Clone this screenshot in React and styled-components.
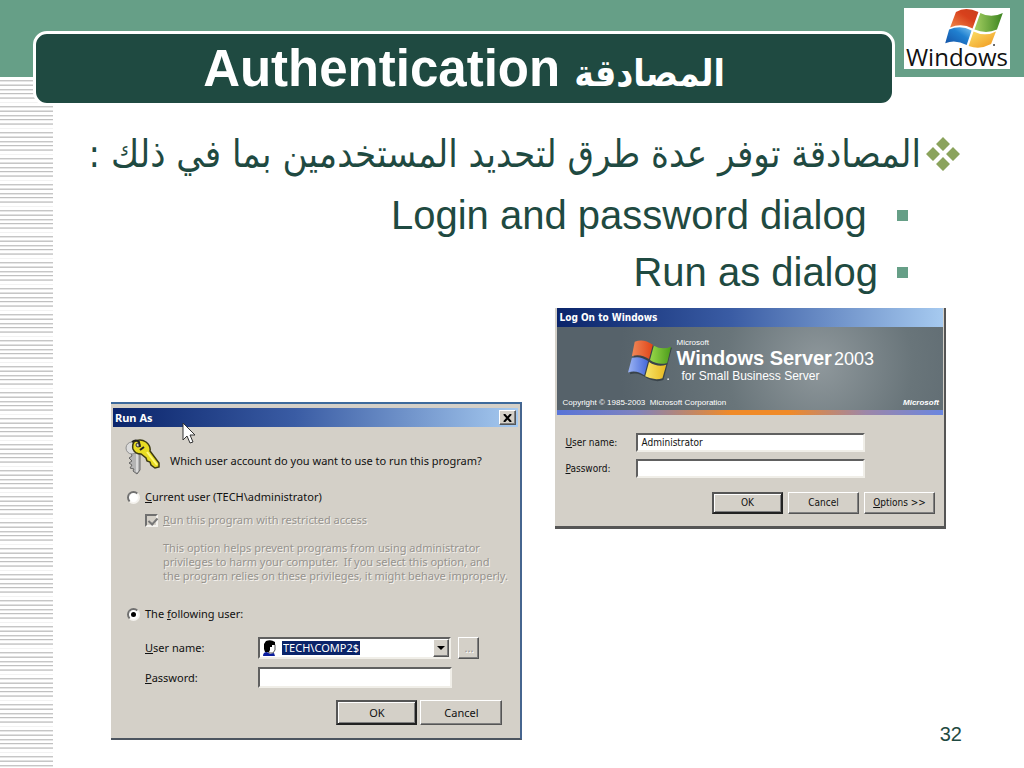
import styled, { createGlobalStyle, css } from "styled-components";

const colors = {
  green: "#669f87",
  darkGreen: "#1f4a41",
  olive: "#8ba35c",
  face: "#d4d0c8",
  shadow: "#808080",
  navy: "#0a246a",
};

const condensed = `"DejaVu Sans Condensed", "DejaVu Sans", sans-serif`;

const GlobalStyle = createGlobalStyle`
  * {
    box-sizing: border-box;
  }
  body {
    margin: 0;
    background: white;
    color: ${colors.darkGreen};
    font-family: "Liberation Sans", "DejaVu Sans", sans-serif;
  }
`;

/* Slide */

const Slide = styled.main`
  min-height: 100vh;
  background: repeating-linear-gradient(
      #fff 0 3px, #c6c6c6 3px 4px, #e6e6e6 4px 5px,
      #fff 5px 7px, #e0e0e0 7px 8px, #c6c6c6 8px 9px,
      #fff 9px 12px, #c6c6c6 12px 13px, #e6e6e6 13px 14px,
      #fff 14px 16px, #c0c0c0 16px 17px, #f0f0f0 17px 18px,
      #fff 18px 20px, #d8d8d8 20px 21px, #d0d0d0 21px 22px,
      #fff 22px 25px, #f2f2f2 25px 26px
    )
    0 77px / 53px 100% no-repeat;
`;

const Header = styled.header`
  display: flex;
  align-items: flex-start;
  gap: 9px;
  padding: 8px 14px 0 33px;
  background: linear-gradient(${colors.green} 77px, transparent 77px);
`;

const Title = styled.h1`
  flex: 1;
  height: 75px;
  margin: 23px 0 0;
  border: 3px solid white;
  border-radius: 14px;
  background: ${colors.darkGreen};
  color: white;
  font-size: 51px;
  line-height: 69px;
  text-align: center;
`;

const TitleArabic = styled.span`
  font-family: ${condensed};
  font-size: 37px;
  line-height: 1;
`;

const Brand = styled.div`
  display: flex;
  flex-direction: column;
  align-items: center;
  width: 106px;
  height: 61px;
  background: white;
  color: #111;
  font: 24px/16px "Open Sans", sans-serif;

  svg {
    flex: none;
    margin-left: 34px;
  }
`;

const Points = styled.ul`
  margin: 0;
  padding: 18px 64px 7px 0;
  list-style: none;
`;

const Point = styled.li`
  display: flex;
  align-items: center;
  gap: 5px;
  height: 60px;
  font-size: 40px;
  white-space: nowrap;

  svg {
    flex: none;
  }

  &:lang(ar) {
    margin-bottom: 3px;
    font-family: ${condensed};
    font-size: 38px;
  }

  ${({ $sub }) => $sub && css`
    gap: 19px;
    height: 57px;
    padding-right: 52px;
  `}
`;

const Square = styled.span`
  width: 11px;
  height: 11px;
  background: ${colors.green};
`;

const Figures = styled.section`
  display: grid;
  grid-template-columns: minmax(0, 412fr) minmax(0, 407fr);
  grid-template-rows: auto 1fr;
  column-gap: 33px;
  padding: 0 62px 0 111px;
`;

const PageNumber = styled.footer`
  align-self: end;
  justify-self: end;
  font-size: 20px;
  line-height: 20px;
`;

/* Windows dialogs */

const Dialog = styled.form`
  background: ${colors.face};
  color: #111;
`;

const RunAsDialog = styled(Dialog)`
  grid-row: 1 / 3;
  margin: 94px 0 4px;
  padding: 4px 2px 0;
  border-top: 2px solid #3d6a9c;
  border-right: 2px solid #46658f;
  border-bottom: 2px solid #4c5560;
  font: 11px/16px "Noto Sans", sans-serif;
`;

const LogOnDialog = styled(Dialog)`
  margin-right: 16px;
  padding: 0 1px 0 2px;
  border-right: 2px solid #555;
  border-bottom: 3px solid #555;
  font: 10px/16px ${condensed};
`;

const TitleBar = styled.div`
  position: relative;
  display: flex;
  align-items: center;
  justify-content: space-between;
  height: 19px;
  padding: 0 2px;
  background: linear-gradient(90deg, ${colors.navy}, #3a5ca4 45%, #a6caf0);
  color: white;
  font-weight: bold;
`;

const raised = css`
  border: 1px solid;
  border-color: #fff #555 #555 #fff;
  box-shadow: inset -1px -1px ${colors.shadow};
  background: ${colors.face};
`;

const Button = styled.button`
  ${raised}
  width: ${({ $width }) => $width || 71}px;
  height: ${({ $height }) => $height || 22}px;
  padding: 0;
  color: #111;
  font: inherit;

  ${({ $primary }) => $primary && css`
    border: 2px solid #333;
    border-color: #555 #222 #222 #555;
    box-shadow: inset 1px 1px #fff, inset -1px -1px ${colors.shadow};
  `}
  &:disabled {
    color: #999;
    text-shadow: 1px 1px white;
  }
`;

const CloseButton = styled.button`
  ${raised}
  display: grid;
  place-items: center;
  width: 17px;
  height: 15px;
  padding: 0;
`;

const Pointer = styled.svg`
  position: absolute;
  left: 69px;
  top: 14px;
  z-index: 1;
`;

const sunken = css`
  border: 2px solid;
  border-color: #606060 #f0eee8 #f0eee8 #606060;
  background: white;
`;

const TextInput = styled.input`
  ${sunken}
  flex: 1;
  min-width: 0;
  height: ${({ $height }) => $height || 19}px;
  padding: 0 3px;
  color: #111;
  font: inherit;
`;

const RunAsBody = styled.div`
  display: flex;
  flex-direction: column;
  padding: 12px 16px 13px 12px;
`;

const Prompt = styled.div`
  display: flex;
  align-items: flex-end;
  gap: 9px;
  height: 36px;
  margin-bottom: 14px;

  svg {
    flex: none;
  }
  span {
    padding-bottom: 6px;
  }
`;

const Choice = styled.label`
  display: flex;
  align-items: center;
  gap: 5px;
  padding-left: 2px;
`;

const RestrictedChoice = styled(Choice)`
  margin-top: 7px;
  padding-left: 20px;
  color: #96938e;
  text-shadow: 1px 1px #f4f2ee;
`;

const Radio = styled.input.attrs({ type: "radio" })`
  appearance: none;
  display: grid;
  place-items: center;
  width: 13px;
  height: 13px;
  margin: 0;
  border: 2px solid;
  border-color: #707070 #f4f2ee #f4f2ee #707070;
  border-radius: 50%;
  background: white;

  &:checked::after {
    content: "";
    width: 5px;
    height: 5px;
    border-radius: 50%;
    background: black;
  }
`;

const Checkbox = styled.input.attrs({ type: "checkbox" })`
  appearance: none;
  width: 13px;
  height: 13px;
  margin: 0;
  border: 2px solid;
  border-color: #707070 #f4f2ee #f4f2ee #707070;
  background: ${colors.face};

  &:checked::after {
    content: "";
    display: block;
    width: 4px;
    height: 7px;
    margin-left: 3px;
    border: solid #777;
    border-width: 0 2px 2px 0;
    transform: rotate(42deg);
  }
`;

const Explanation = styled.p`
  margin: 13px 0 23px;
  padding-left: 38px;
  color: #96938e;
  line-height: 14px;
  text-shadow: 1px 1px #f4f2ee;
  white-space: pre;
`;

const Field = styled.div`
  display: flex;
  align-items: center;

  & > label {
    flex: none;
    width: ${({ $label }) => $label}px;
  }
`;

const RunAsFields = styled.div`
  display: grid;
  gap: 8px;
  padding: 15px 23px 12px 20px;
`;

const Combo = styled.div`
  ${sunken}
  display: flex;
  flex: 1;
  align-items: center;
  gap: 5px;
  height: 22px;
  margin-right: 7px;
  padding-left: 3px;
`;

const UserSelect = styled.select`
  appearance: none;
  width: 78px;
  height: 14px;
  margin-right: auto;
  padding: 0 1px;
  border: 0;
  border-radius: 0;
  background: ${colors.navy};
  color: white;
  font: inherit;
  line-height: 14px;
`;

const DropButton = styled(CloseButton)`
  width: 16px;
  height: 18px;
`;

const PasswordInput = styled(TextInput)`
  margin-right: 27px;
`;

const Actions = styled.div`
  display: flex;
  justify-content: flex-end;
  gap: ${({ $gap }) => $gap}px;
`;

const Banner = styled.div`
  display: flex;
  flex-direction: column;
  justify-content: space-between;
  height: 83px;
  padding: 12px 4px 0 5px;
  background: radial-gradient(circle at 68% 45%, #8f989c, #69757a 35%, #56626a 75%);
  color: white;
`;

const Product = styled.div`
  display: flex;
  gap: 4px;
  padding-left: 66px;
  font-family: "Liberation Sans", sans-serif;
  white-space: nowrap;
`;

const ProductMaker = styled.div`
  font-size: 8px;
  line-height: 8px;
`;

const ProductName = styled.div`
  font: bold 20px/22px "Liberation Sans", sans-serif;

  span {
    margin-left: 2px;
    font-size: 18px;
    font-weight: normal;
  }
`;

const ProductEdition = styled.div`
  padding-left: 5px;
  font-size: 12px;
  line-height: 12px;
`;

const Legal = styled.div`
  display: flex;
  justify-content: space-between;
  font: 8px/15px "Liberation Sans", sans-serif;

  em {
    font-weight: bold;
  }
`;

const Stripe = styled.div`
  height: 5px;
  background: linear-gradient(90deg, #5874d8, #7d82c0 20%, #f08a28 45%, #f08a28 60%, #9c86a8 80%, #6a86e0);
`;

const LogOnBody = styled.div`
  display: grid;
  gap: 7px;
  padding: 18px 8px 12px;
`;

const LogOnField = styled(Field)`
  padding-right: 70px;
`;

const LogOnActions = styled(Actions)`
  padding-top: 7px;
`;

const BrandFlag = () => (
  <svg width="59" height="41" viewBox="0 0 60 42" aria-hidden="true">
    <defs>
      <linearGradient id="brand-red" x1="0" y1="1" x2="1" y2="0">
        <stop offset="0" stopColor="#f08a4a" />
        <stop offset=".6" stopColor="#d8401c" />
        <stop offset="1" stopColor="#c9401c" />
      </linearGradient>
      <linearGradient id="brand-green">
        <stop offset="0" stopColor="#a4cf62" />
        <stop offset="1" stopColor="#3c8420" />
      </linearGradient>
      <linearGradient id="brand-blue" x1="0" y1="1" x2="1" y2="0">
        <stop offset="0" stopColor="#1450a4" />
        <stop offset=".6" stopColor="#2080d0" />
        <stop offset="1" stopColor="#7cc4f0" />
      </linearGradient>
      <linearGradient id="brand-yellow" x1="0" y1="0" x2="1" y2="1">
        <stop offset="0" stopColor="#fbe069" />
        <stop offset="1" stopColor="#f0961c" />
      </linearGradient>
    </defs>
    <path fill="url(#brand-red)" d="M11 4Q21-2 34 4L28 21Q17 15 5 20Z" />
    <path fill="url(#brand-green)" d="M36 5Q47 11 59 5L53 22Q42 27 30 22Z" />
    <path fill="url(#brand-blue)" d="M4 22Q16 17 27 23L22 38Q11 32 0 36Z" />
    <path fill="url(#brand-yellow)" d="M29 24Q41 30 52 24L47 37Q36 43 24 39Z" />
    <circle cx="50" cy="38" r="1" fill="#333" />
  </svg>
);

const ServerFlag = () => (
  <svg width="44" height="43" viewBox="0 0 46 45" aria-hidden="true">
    <defs>
      <linearGradient id="server-red">
        <stop offset="0" stopColor="#f08858" />
        <stop offset="1" stopColor="#e04418" />
      </linearGradient>
      <linearGradient id="server-green">
        <stop offset="0" stopColor="#98d848" />
        <stop offset="1" stopColor="#4c9c1c" />
      </linearGradient>
      <linearGradient id="server-blue">
        <stop offset="0" stopColor="#9cb4f4" />
        <stop offset="1" stopColor="#4468d8" />
      </linearGradient>
      <linearGradient id="server-yellow">
        <stop offset="0" stopColor="#f8e468" />
        <stop offset="1" stopColor="#e8b820" />
      </linearGradient>
    </defs>
    <path fill="#39434a" d="M9 5Q17 0 28 8Q37 13 46 9L37 43Q29 46 20 41Q10 34 2 37Z" />
    <path fill="url(#server-red)" d="M7 3Q16-1 26 6L22 21Q13 15 4 18Z" />
    <path fill="url(#server-green)" d="M27 7Q36 12 45 8L41 25Q32 28 23 22Z" />
    <path fill="url(#server-blue)" d="M4 20Q12 17 21 23L17 38Q9 32 0 35Z" />
    <path fill="url(#server-yellow)" d="M22 24Q31 30 40 27L36 41Q28 44 18 39Z" />
    <circle cx="42" cy="42" r="1" fill="#ddd" />
  </svg>
);

const Diamonds = () => (
  <svg width="34" height="34" viewBox="0 0 34 34" fill={colors.olive} aria-hidden="true">
    <path d="M17 0l7 7-7 7-7-7zM7 10l7 7-7 7-7-7zM27 10l7 7-7 7-7-7zM17 20l7 7-7 7-7-7z" />
  </svg>
);

const Keys = () => (
  <svg width="36" height="36" viewBox="0 0 36 36" aria-hidden="true">
    <path d="M6 14h9v17l-3 4-4-3 1-2-4-1 2-3-3-2 3-2-3-3 3-2z" fill="#b4b4b4" stroke="#666" />
    <circle cx="7" cy="9" r="6" fill="#dcdcdc" stroke="#909090" />
    <path d="M12 15v18" stroke="#fff" />
    <path d="M9 3Q15-1 21 3q5 4 4 9l9 12v4l-4 1-4-3-1-3-3-1-1-3-5-4q-6 0-8-5-1-4 1-7z" fill="#e8dc22" stroke="#3c3a12" strokeWidth="1.5" />
    <path d="M22 13l10 13" stroke="#fff87a" strokeWidth="2" />
    <circle cx="13" cy="6" r="2" fill="#d4d0c8" stroke="#333" />
    <path d="M7 3q4-3 7 0l1 5M15 11l4-3" fill="none" stroke="#222" strokeWidth="2" />
  </svg>
);

const UserIcon = () => (
  <svg width="14" height="16" viewBox="0 0 14 16" aria-hidden="true">
    <path d="M5 2h5l2 3v5l-2 3H6L4 9z" fill="#fff" stroke="#555" />
    <path d="M3 1Q8-1 12 2v3H9v2H7v3l-1 2H2L1 9V4z" />
    <path d="M0 16q0-4 4-4l3 2 4-1 1 3z" fill="#0a1c9c" />
  </svg>
);

const App = () => (
  <>
    <GlobalStyle />
    <Slide>
      <Header>
        <Title>
          Authentication <TitleArabic lang="ar">المصادقة</TitleArabic>
        </Title>
        <Brand>
          <BrandFlag />
          Windows
        </Brand>
      </Header>

      <Points dir="rtl">
        <Point lang="ar">
          <Diamonds />
          <span>المصادقة توفر عدة طرق لتحديد المستخدمين بما في ذلك :</span>
        </Point>
        <Point $sub>
          <Square />
          <span>&nbsp;Login and password dialog</span>
        </Point>
        <Point $sub>
          <Square />
          <span>Run as dialog</span>
        </Point>
      </Points>

      <Figures>
        <RunAsDialog onSubmit={(e) => e.preventDefault()}>
          <TitleBar>
            Run As
            <CloseButton type="button" aria-label="Close">
              <svg width="9" height="8" viewBox="0 0 9 8" stroke="#000" strokeWidth="2">
                <path d="M1 0l7 8M8 0L1 8" />
              </svg>
            </CloseButton>
            <Pointer width="14" height="23" viewBox="0 0 14 23" aria-hidden="true">
              <path d="M1 1v17l4-4 3 7 3-1-3-7h5z" fill="#fff" stroke="#333" />
            </Pointer>
          </TitleBar>
          <RunAsBody>
            <Prompt>
              <Keys />
              <span>Which user account do you want to use to run this program?</span>
            </Prompt>
            <Choice>
              <Radio name="account" />
              <span><u>C</u>urrent user (TECH\administrator)</span>
            </Choice>
            <RestrictedChoice>
              <Checkbox defaultChecked disabled />
              <span><u>R</u>un this program with restricted access</span>
            </RestrictedChoice>
            <Explanation>
              {"This option helps prevent programs from using administrator\nprivileges to harm your computer.  If you select this option, and\nthe program relies on these privileges, it might behave improperly."}
            </Explanation>
            <Choice>
              <Radio name="account" defaultChecked />
              <span>The <u>f</u>ollowing user:</span>
            </Choice>
            <RunAsFields>
              <Field $label={113}>
                <label htmlFor="runas-user"><u>U</u>ser name:</label>
                <Combo>
                  <UserIcon />
                  <UserSelect id="runas-user">
                    <option>TECH\COMP2$</option>
                  </UserSelect>
                  <DropButton type="button" aria-label="Show users">
                    <svg width="8" height="4" viewBox="0 0 8 4"><path d="M0 0h8L4 4z" /></svg>
                  </DropButton>
                </Combo>
                <Button type="button" $width={21} disabled>...</Button>
              </Field>
              <Field $label={113}>
                <label htmlFor="runas-password"><u>P</u>assword:</label>
                <PasswordInput id="runas-password" type="password" $height={21} />
              </Field>
            </RunAsFields>
            <Actions $gap={3}>
              <Button $primary $width={81} $height={25}>OK</Button>
              <Button type="button" $width={82} $height={25}>Cancel</Button>
            </Actions>
          </RunAsBody>
        </RunAsDialog>

        <LogOnDialog onSubmit={(e) => e.preventDefault()}>
          <TitleBar>Log On to Windows</TitleBar>
          <Banner>
            <Product>
              <ServerFlag />
              <div>
                <ProductMaker>Microsoft</ProductMaker>
                <ProductName>Windows Server<span>2003</span></ProductName>
                <ProductEdition>for Small Business Server</ProductEdition>
              </div>
            </Product>
            <Legal>
              <span>Copyright © 1985-2003 &nbsp;Microsoft Corporation</span>
              <em>Microsoft</em>
            </Legal>
          </Banner>
          <Stripe />
          <LogOnBody>
            <LogOnField $label={71}>
              <label htmlFor="logon-user"><u>U</u>ser name:</label>
              <TextInput id="logon-user" defaultValue="Administrator" />
            </LogOnField>
            <LogOnField $label={71}>
              <label htmlFor="logon-password"><u>P</u>assword:</label>
              <TextInput id="logon-password" type="password" />
            </LogOnField>
            <LogOnActions $gap={5}>
              <Button $primary>OK</Button>
              <Button type="button">Cancel</Button>
              <Button type="button"><u>O</u>ptions &gt;&gt;</Button>
            </LogOnActions>
          </LogOnBody>
        </LogOnDialog>

        <PageNumber>32</PageNumber>
      </Figures>
    </Slide>
  </>
);

export default App;
